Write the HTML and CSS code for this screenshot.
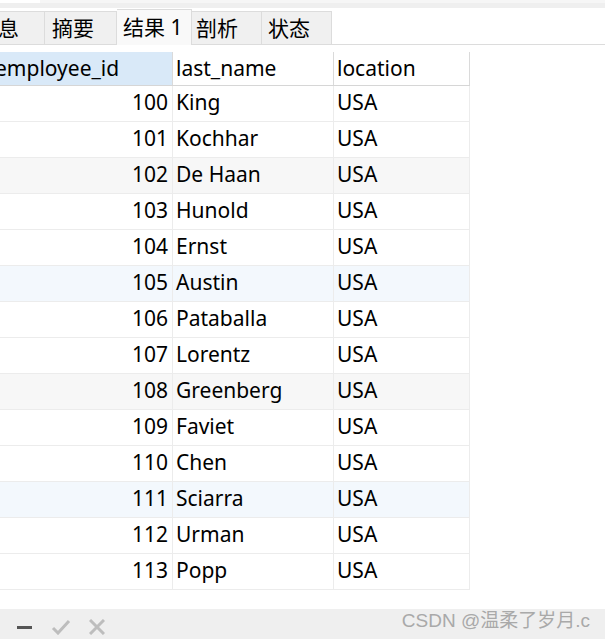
FILE: index.html
```html
<!DOCTYPE html>
<html>
<head>
<meta charset="utf-8">
<link rel="stylesheet" href="styles.css">
</head>
<body>
<div class="top"><div class="top-a"></div><div class="top-b"></div></div>
<div class="tabs">
  <div class="tab t1">信息</div>
  <div class="tab t2">摘要</div>
  <div class="tab t3 active">结果 1</div>
  <div class="tab t4">剖析</div>
  <div class="tab t5">状态</div>
</div>
<div class="grid">
  <div class="row head">
    <div class="c c1 sel">employee_id</div><div class="c c2">last_name</div><div class="c c3">location</div>
  </div>
  <div class="row"><div class="c c1 num">100</div><div class="c c2">King</div><div class="c c3">USA</div></div>
  <div class="row"><div class="c c1 num">101</div><div class="c c2">Kochhar</div><div class="c c3">USA</div></div>
  <div class="row gray"><div class="c c1 num">102</div><div class="c c2">De Haan</div><div class="c c3">USA</div></div>
  <div class="row"><div class="c c1 num">103</div><div class="c c2">Hunold</div><div class="c c3">USA</div></div>
  <div class="row"><div class="c c1 num">104</div><div class="c c2">Ernst</div><div class="c c3">USA</div></div>
  <div class="row blue"><div class="c c1 num">105</div><div class="c c2">Austin</div><div class="c c3">USA</div></div>
  <div class="row"><div class="c c1 num">106</div><div class="c c2">Pataballa</div><div class="c c3">USA</div></div>
  <div class="row"><div class="c c1 num">107</div><div class="c c2">Lorentz</div><div class="c c3">USA</div></div>
  <div class="row gray"><div class="c c1 num">108</div><div class="c c2">Greenberg</div><div class="c c3">USA</div></div>
  <div class="row"><div class="c c1 num">109</div><div class="c c2">Faviet</div><div class="c c3">USA</div></div>
  <div class="row"><div class="c c1 num">110</div><div class="c c2">Chen</div><div class="c c3">USA</div></div>
  <div class="row blue"><div class="c c1 num">111</div><div class="c c2">Sciarra</div><div class="c c3">USA</div></div>
  <div class="row"><div class="c c1 num">112</div><div class="c c2">Urman</div><div class="c c3">USA</div></div>
  <div class="row"><div class="c c1 num">113</div><div class="c c2">Popp</div><div class="c c3">USA</div></div>
</div>
<div class="bottom">
  <div class="icons">
    <svg class="ic" width="16" height="16" viewBox="0 0 16 16"><rect x="0" y="7" width="15" height="3" fill="#555"/></svg>
    <svg class="ic" width="20" height="16" viewBox="0 0 20 16"><path d="M2 9 L7 14 L18 2" fill="none" stroke="#bdbdbd" stroke-width="3"/></svg>
    <svg class="ic" width="16" height="16" viewBox="0 0 16 16"><path d="M1 1 L15 15 M15 1 L1 15" fill="none" stroke="#bdbdbd" stroke-width="3"/></svg>
  </div>
  <div class="mark">CSDN @温柔了岁月.c</div>
</div>
</body>
</html>
```

FILE: styles.css
```css
* { box-sizing: border-box; }
html, body { margin: 0; padding: 0; background: #fff; }
body {
  width: 605px; height: 639px; overflow: hidden;
  font-family: "Noto Sans", "Noto Sans CJK SC", sans-serif;
  font-size: 21px; color: #000;
}
.top { height: 11px; }
.top-a { height: 3px; background: linear-gradient(to right, #fff 40px, #f6f6f6 40px); }
.top-b { height: 5px; background: #efefef; }
.tabs {
  display: flex; align-items: flex-end;
  height: 34px; border-bottom: 1px solid #dcdcdc;
  margin-left: -28px;
}
.tab {
  height: 33px; line-height: 32px;
  background: #f0f0f0; border: 1px solid #dcdcdc; border-bottom: none;
  border-left: none;
  padding-left: 7px; font-size: 21px; white-space: nowrap;
}
.t1 { width: 73px; padding-left: 4px; border-left: 1px solid #dcdcdc; }
.t2 { width: 72px; }
.t3 { width: 75px; padding-left: 6px; }
.t4 { width: 70px; padding-left: 4px; }
.t5 { width: 70px; padding-left: 6px; }
.tab.active {
  height: 36px; line-height: 34px; margin-bottom: -1px;
  background: #f9f9f9; border-color: #dcdcdc;
}
.grid { margin-top: 7px; margin-left: -8px; width: 478px; }
.row {
  display: grid; grid-template-columns: 181px 161px 136px;
  height: 36px; border-bottom: 1px solid #ececec;
}
.row.head { height: 34px; border-bottom: 1px solid #d6d6d6; }
.c {
  border-right: 1px solid #ececec;
  display: flex; align-items: center; white-space: nowrap; overflow: hidden;
  padding-left: 3px; padding-bottom: 3px;
}
.head .c { border-right-color: #dadada; padding-bottom: 2px; }
.c.sel { background: #d9e9f8; padding-left: 3px; }
.c.num { justify-content: flex-end; padding-right: 4px; }
.row.gray { background: #f7f7f7; }
.row.blue { background: #f3f8fd; }
.bottom {
  margin-top: 19px; height: 30px; background: #efefef;
  display: flex; align-items: center; justify-content: space-between;
  padding: 0 15px 0 17px;
}
.icons { display: flex; align-items: center; padding-top: 6px; }
.ic { display: block; }
.ic + .ic { margin-left: 18px; }
.mark {
  font-family: "Liberation Sans", "Noto Sans CJK SC", sans-serif;
  font-size: 19px; line-height: 22px; color: #a9a9a9;
  align-self: flex-start; margin-top: 1px;
}
```
